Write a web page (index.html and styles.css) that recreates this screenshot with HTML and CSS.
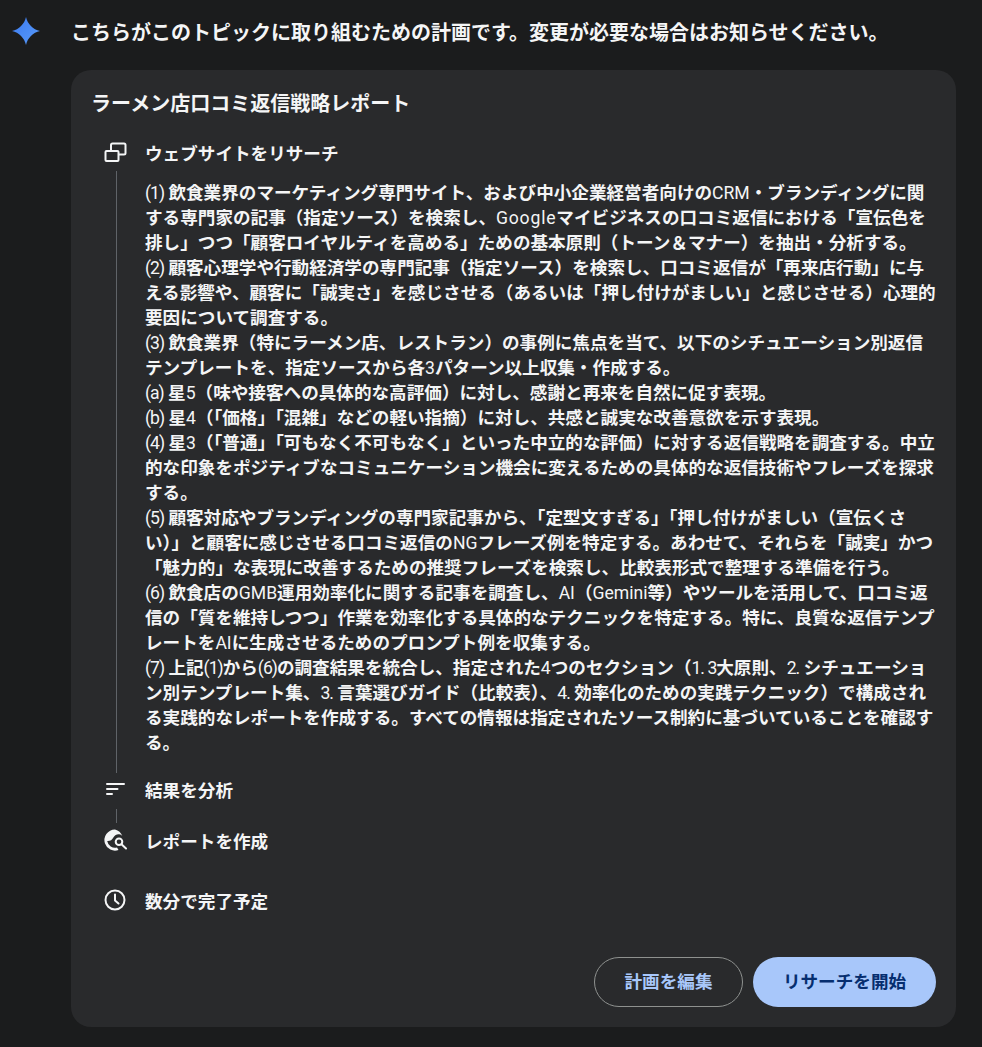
FILE: index.html
```html
<!DOCTYPE html>
<html lang="ja">
<head>
    <meta charset="utf-8">
    <link rel="stylesheet" href="styles.css">
</head>
<body>
    <div class="intro">
        <svg class="spark" viewBox="0 0 28 28">
            <defs>
                <linearGradient id="sparkFill" x1="0" y1="0" x2="1" y2="1">
                    <stop offset="0" stop-color="#3b7af0"/>
                    <stop offset="1" stop-color="#5a9cfa"/>
                </linearGradient>
            </defs>
            <path fill="url(#sparkFill)" d="M14 0C15.500 7 21 12.500 28 14 21 15.500 15.500 21 14 28 12.500 21 7 15.500 0 14 7 12.500 12.500 7 14 0Z"/>
        </svg>
        <p class="intro-text">こちらがこのトピックに取り組むための計画です。変更が必要な場合はお知らせください。</p>
    </div>

    <div class="card">
        <h2 class="card-title">ラーメン店口コミ返信戦略レポート</h2>

        <div class="step">
            <div class="step-icon">
                <svg viewBox="0 0 24 24"><path d="M3.500 11h11a1 1 0 0 1 1 1v8a1 1 0 0 1-1 1h-11a1 1 0 0 1-1-1v-8a1 1 0 0 1 1-1ZM8 11V5a1.500 1.500 0 0 1 1.500-1.500H21a1.500 1.500 0 0 1 1.500 1.500v8a1.500 1.500 0 0 1-1.500 1.500h-5.500"/></svg>
            </div>
            <div class="step-label">ウェブサイトをリサーチ</div>
        </div>

        <div class="plan">
            <div class="plan-line"></div>
            <div class="plan-text">
                <span class="num">(1)</span> 飲食業界のマーケティング専門サイト、および中小企業経営者向けの<span class="lat">CRM</span>・ブランディングに関する専門家の記事（指定ソース）を検索し、<span class="lat wide">Google</span>マイビジネスの口コミ返信における「宣伝色を排し」つつ「顧客ロイヤルティを高める」ための基本原則（トーン＆マナー）を抽出・分析する。<br>
                <span class="num">(2)</span> 顧客心理学や行動経済学の専門記事（指定ソース）を検索し、口コミ返信が「再来店行動」に与える影響や、顧客に「誠実さ」を感じさせる（あるいは「押し付けがましい」と感じさせる）心理的要因について調査する。<br>
                <span class="num">(3)</span> 飲食業界（特にラーメン店、レストラン）の事例に焦点を当て、以下のシチュエーション別返信テンプレートを、指定ソースから各<span class="lat">3</span>パターン以上収集・作成する。<br>
                <span class="num">(a)</span> 星<span class="lat">5</span>（味や接客への具体的な高評価）に対し、感謝と再来を自然に促す表現。<br>
                <span class="num">(b)</span> 星<span class="lat">4</span>（「価格」「混雑」などの軽い指摘）に対し、共感と誠実な改善意欲を示す表現。<br>
                <span class="num">(4)</span> 星<span class="lat">3</span>（「普通」「可もなく不可もなく」といった中立的な評価）に対する返信戦略を調査する。中立的な印象をポジティブなコミュニケーション機会に変えるための具体的な返信技術やフレーズを探求する。<br>
                <span class="num">(5)</span> 顧客対応やブランディングの専門家記事から、「定型文すぎる」「押し付けがましい（宣伝くさい）」と顧客に感じさせる口コミ返信の<span class="lat">NG</span>フレーズ例を特定する。あわせて、それらを「誠実」かつ「魅力的」な表現に改善するための推奨フレーズを検索し、比較表形式で整理する準備を行う。<br>
                <span class="num">(6)</span> 飲食店の<span class="lat">GMB</span>運用効率化に関する記事を調査し、<span class="lat">AI</span>（<span class="lat">Gemini</span>等）やツールを活用して、口コミ返信の「質を維持しつつ」作業を効率化する具体的なテクニックを特定する。特に、良質な返信テンプレートを<span class="lat">AI</span>に生成させるためのプロンプト例を収集する。<br>
                <span class="num">(7)</span> 上記<span class="num">(1)</span>から<span class="num">(6)</span>の調査結果を統合し、指定された<span class="lat">4</span>つのセクション（<span class="num">1. 3</span>大原則、<span class="num">2.</span> シチュエーション別テンプレート集、<span class="num">3.</span> 言葉選びガイド（比較表）、<span class="num">4.</span> 効率化のための実践テクニック）で構成される実践的なレポートを作成する。すべての情報は指定されたソース制約に基づいていることを確認する。
            </div>
        </div>

        <div class="step step-analyze">
            <div class="step-icon">
                <svg viewBox="0 0 24 24"><path class="round" d="M4 7h17M4 12h10.500M4 17h5"/></svg>
            </div>
            <div class="step-label">結果を分析</div>
        </div>

        <div class="link-line"></div>

        <div class="step step-report">
            <div class="step-icon">
                <svg viewBox="0 0 24 24">
                    <path class="solid" d="M12 1.500A10.500 10.500 0 0 0 2 15.500 10.500 10.500 0 0 0 15.500 22l-1.500-2.500a8 8 0 0 1-9.800-6.500c2.800.2 5-1 6-3.200 1-2.200 3.400-3.800 6-3.500 1.300.2 2.300.8 3.100 1.700A10.500 10.500 0 0 0 12 1.500Z"/>
                    <circle cx="16" cy="13.700" r="3.300"/>
                    <path class="round" d="M18.500 16.200L23 20.500"/>
                </svg>
            </div>
            <div class="step-label">レポートを作成</div>
        </div>

        <div class="step step-time">
            <div class="step-icon">
                <svg viewBox="0 0 24 24"><circle cx="12" cy="12" r="9.500"/><path class="round" d="M12 6.500V12.500L15.500 15.500"/></svg>
            </div>
            <div class="step-label">数分で完了予定</div>
        </div>

        <div class="actions">
            <button class="btn btn-edit">計画を編集</button>
            <button class="btn btn-start">リサーチを開始</button>
        </div>
    </div>
</body>
</html>
```

FILE: styles.css
```css
* {
    margin: 0;
    padding: 0;
    box-sizing: border-box;
}

body {
    min-height: 100vh;
    background: #1b1c1d;
    color: #e8eaed;
    font-family: 'Roboto', 'Noto Sans CJK JP', sans-serif;
    font-weight: 700;
    overflow: hidden;
    padding: 15px 26px 20px 12px;
}

.intro {
    display: flex;
    align-items: center;
    gap: 31px;
    height: 32px;
}

.spark {
    width: 28px;
    height: 28px;
    flex: none;
}

.intro-text {
    font-size: 20px;
    color: #f4f5f6;
}

.card {
    margin: 23px 0 0 59px;
    height: 957px;
    background: #292a2c;
    border-radius: 20px;
    padding: 20px;
    display: flex;
    flex-direction: column;
}

.card-title {
    font-size: 20px;
    line-height: 28px;
    font-weight: 700;
    color: #f4f5f6;
    margin-bottom: 19px;
}

.step {
    display: flex;
    align-items: center;
    gap: 18px;
    height: 30px;
    padding-left: 12px;
}

.step-icon {
    width: 24px;
    height: 24px;
    flex: none;
}

.step-icon svg {
    display: block;
    width: 24px;
    height: 24px;
    fill: none;
    stroke: #f4f5f6;
    stroke-width: 2;
}

.step-icon .round {
    stroke-linecap: round;
    stroke-linejoin: round;
}

.step-icon .solid {
    fill: #f4f5f6;
    stroke: none;
}

.step-label {
    font-size: 17.6px;
    color: #f4f5f6;
}

.plan {
    display: flex;
}

.plan-line {
    width: 1px;
    background: #5f6368;
    margin: 4px 0 0 25px;
    flex: none;
}

.plan-text {
    font-size: 17.6px;
    line-height: 25px;
    color: #f4f5f6;
    padding: 14px 0 17px 28px;
}

.lat {
    font-weight: 400;
}

.num {
    font-weight: 400;
    letter-spacing: -1px;
}

.wide {
    letter-spacing: 0.8px;
}

.step-analyze {
    height: 32px;
    margin-bottom: 4px;
}

.link-line {
    width: 1px;
    height: 14px;
    background: #5f6368;
    margin-left: 25px;
}

.step-report {
    height: 34px;
}

.step-time {
    margin-top: 28px;
}

.actions {
    margin-top: auto;
    display: flex;
    justify-content: flex-end;
    gap: 10px;
}

.btn {
    height: 50px;
    border-radius: 25px;
    font-family: inherit;
    font-size: 17.6px;
    font-weight: 700;
    padding-bottom: 3px;
}

.btn-edit {
    width: 149px;
    background: transparent;
    border: 1px solid #8e918f;
    color: #a8c7fa;
}

.btn-start {
    width: 183px;
    background: #a8c7fa;
    border: none;
    color: #062e6f;
}
```
